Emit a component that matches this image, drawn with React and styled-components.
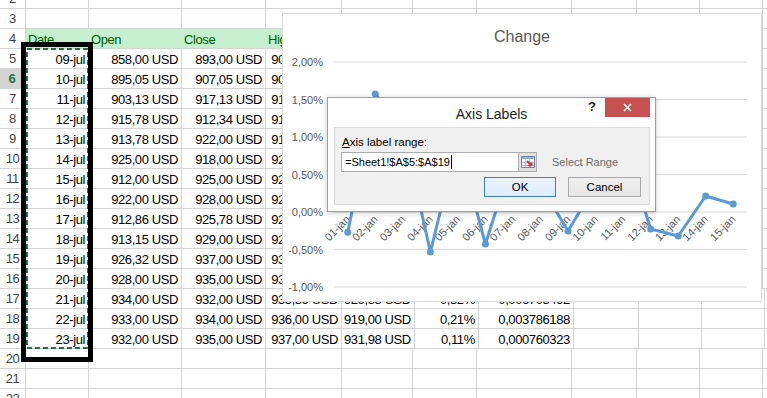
import React from 'react';
import styled, { createGlobalStyle } from 'styled-components';

const GlobalStyle = createGlobalStyle`
    html, body {
        margin: 0;
        padding: 0;
        background: #fff;
        overflow: hidden;
    }
    body {
        font-family: 'Liberation Sans', Arial, sans-serif;
    }
`;

const CELL_FONT = `'Liberation Sans', Arial, sans-serif`;
const COLS = [63, 93, 84, 76, 71, 64, 95, 65, 63, 63, 120];

const sheetRows = [
    { n: 2 },
    { n: 3 },
    { n: 4, head: true, cells: ['Date', 'Open', 'Close', 'High'] },
    { n: 5, cells: ['09-jul', '858,00 USD', '893,00 USD', '905,00 USD'] },
    { n: 6, cells: ['10-jul', '895,05 USD', '907,05 USD', '908,00 USD'], active: true },
    { n: 7, cells: ['11-jul', '903,13 USD', '917,13 USD', '918,45 USD'] },
    { n: 8, cells: ['12-jul', '915,78 USD', '912,34 USD', '917,00 USD'] },
    { n: 9, cells: ['13-jul', '913,78 USD', '922,00 USD', '919,00 USD'] },
    { n: 10, cells: ['14-jul', '925,00 USD', '918,00 USD', '925,00 USD'] },
    { n: 11, cells: ['15-jul', '912,00 USD', '925,00 USD', '927,36 USD'] },
    { n: 12, cells: ['16-jul', '922,00 USD', '928,00 USD', '928,90 USD'] },
    { n: 13, cells: ['17-jul', '912,86 USD', '925,78 USD', '929,44 USD'] },
    { n: 14, cells: ['18-jul', '913,15 USD', '929,00 USD', '929,50 USD'] },
    { n: 15, cells: ['19-jul', '926,32 USD', '937,00 USD', '937,50 USD'] },
    { n: 16, cells: ['20-jul', '928,00 USD', '935,00 USD', '937,19 USD'] },
    { n: 17, cells: ['21-jul', '934,00 USD', '932,00 USD', '935,89 USD', '929,88 USD', '0,32%', '0,006703492'] },
    { n: 18, cells: ['22-jul', '933,00 USD', '934,00 USD', '936,00 USD', '919,00 USD', '0,21%', '0,003786188'] },
    { n: 19, cells: ['23-jul', '932,00 USD', '935,00 USD', '937,00 USD', '931,98 USD', '0,11%', '0,000760323'] },
    { n: 20 },
    { n: 21 },
    { n: 22 },
];

// chart series, percent values
const series = [-0.27, 1.573, 1.107, -0.533, 0.96, -0.427, 0.733, 0.36, -0.253, 0.36, 0.96, -0.227, -0.32, 0.213, 0.107];
const ticks = [2, 1.5, 1, 0.5, 0, -0.5, -1];

const PLOT_LEFT = 334;
const PLOT_RIGHT = 747;
const ZERO_Y = 212;
const STEP = 75;
const catW = (PLOT_RIGHT - PLOT_LEFT) / series.length;
const px = (i) => PLOT_LEFT + catW * (i + 0.5);
const py = (v) => ZERO_Y - v * STEP;
const fmt = (v) => v.toFixed(2).replace('.', ',') + '%';

const Screen = styled.div`
    position: relative;
    width: 767px;
    height: 398px;
    overflow: hidden;
`;

const Sheet = styled.div`
    display: flex;
    flex-direction: column;
    margin-top: -11px;
`;

const Row = styled.div`
    display: flex;
    height: 20px;
`;

const RowHead = styled.div`
    flex: 0 0 26px;
    box-sizing: border-box;
    border-right: ${p => (p.$active ? '2px solid #217346' : '1px solid #d4d4d4')};
    border-bottom: 1px solid #d4d4d4;
    background: ${p => (p.$active ? '#d4d4d4' : '#fff')};
    color: ${p => (p.$active ? '#217346' : '#444')};
    font-weight: ${p => (p.$active ? 700 : 400)};
    font-family: ${CELL_FONT};
    font-size: 13px;
    letter-spacing: -0.4px;
    line-height: 18px;
    padding-top: 1px;
    text-align: center;
    white-space: nowrap;
    overflow: hidden;
`;

const Cell = styled.div`
    flex: 0 0 ${p => p.$w}px;
    box-sizing: border-box;
    height: 20px;
    border-right: 1px solid ${p => (p.$fill ? p.$fill : '#d4d4d4')};
    border-bottom: 1px solid #d4d4d4;
    background: ${p => p.$fill || 'transparent'};
    color: ${p => p.$ink || '#000'};
    text-align: ${p => p.$align};
    padding: 2px 3px 0 2px;
    font-family: ${CELL_FONT};
    font-size: 13px;
    letter-spacing: -0.4px;
    line-height: 18px;
    white-space: nowrap;
`;

const Marker = styled.div`
    position: absolute;
    left: 21px;
    top: 42px;
    width: 72px;
    height: 320px;
    box-sizing: border-box;
    border: 5px solid #000;
`;

const Ants = styled.svg`
    position: absolute;
    left: 26px;
    top: 48px;
`;

const Chart = styled.div`
    position: absolute;
    left: 282px;
    top: 13px;
    width: 480px;
    height: 289px;
    box-sizing: border-box;
    border: 1px solid #d9d9d9;
    background: #fff;
`;

const ChartTitle = styled.div`
    position: relative;
    z-index: 1;
    margin-top: 13px;
    text-align: center;
    font-size: 16px;
    line-height: 20px;
    color: #595959;
`;

const Plot = styled.svg`
    position: absolute;
    left: 0;
    top: 0;
    font-family: 'Liberation Sans', Arial, sans-serif;
    font-size: 11px;
`;

const Dialog = styled.div`
    position: absolute;
    left: 327px;
    top: 97px;
    width: 329px;
    height: 115px;
    box-sizing: border-box;
    background: #fff;
    border: 1px solid #a0a0a0;
    box-shadow: 0 1px 5px rgba(0, 0, 0, 0.22);
    display: flex;
    flex-direction: column;
`;

const TitleBar = styled.div`
    display: grid;
    grid-template-columns: 1fr auto 1fr;
    height: 29px;
`;

const DialogTitle = styled.div`
    grid-column: 2;
    align-self: center;
    font-size: 14px;
    color: #1e1e1e;
    padding-top: 2px;
`;

const TitleControls = styled.div`
    grid-column: 3;
    justify-self: end;
    display: flex;
    align-items: flex-start;
    margin-right: 5px;
`;

const Help = styled.span`
    font-size: 13px;
    font-weight: 700;
    color: #222;
    margin: 1px 9px 0 0;
`;

const CloseBtn = styled.div`
    width: 45px;
    height: 19px;
    background: #c75050;
    display: flex;
    align-items: center;
    justify-content: center;
`;

const Panel = styled.div`
    flex: 1;
    margin: 0 5px 6px 6px;
    border: 1px solid #dcdcdc;
    background: #f0f0f0;
    padding: 7px 7px 0 6px;
    display: flex;
    flex-direction: column;
`;

const FieldLabel = styled.div`
    font-size: 11.5px;
    line-height: 14px;
    color: #000;
    padding-left: 1px;
    u {
        text-decoration: underline;
    }
`;

const FieldRow = styled.div`
    display: flex;
    align-items: center;
    margin-top: 3px;
    height: 20px;
`;

const RangeInput = styled.div`
    width: 178px;
    height: 20px;
    box-sizing: border-box;
    border: 1px solid #abadb3;
    background: #fff;
    font-size: 11px;
    line-height: 18px;
    padding-left: 3px;
    color: #000;
    display: flex;
    align-items: center;
`;

const Caret = styled.span`
    display: inline-block;
    width: 1px;
    height: 14px;
    background: #000;
    margin-left: 1px;
`;

const RangeBtn = styled.div`
    width: 18px;
    height: 20px;
    box-sizing: border-box;
    border: 1px solid #adadad;
    border-left: none;
    background: #e1e1e1;
    display: flex;
    align-items: center;
    justify-content: center;
`;

const Hint = styled.span`
    margin-left: 15px;
    font-size: 11px;
    color: #6d6d6d;
`;

const Buttons = styled.div`
    display: flex;
    justify-content: flex-end;
    gap: 12px;
    margin-top: 5px;
    padding-right: 1px;
`;

const Button = styled.div`
    width: ${p => p.$w}px;
    height: 20px;
    box-sizing: border-box;
    border: 1px solid ${p => (p.$primary ? '#3c7fb1' : '#acacac')};
    background: ${p => (p.$primary ? 'linear-gradient(#ecf4fc, #dcecfc)' : 'linear-gradient(#f0f0f0, #e5e5e5)')};
    font-size: 11.5px;
    line-height: 18px;
    text-align: center;
    color: #000;
`;

const SheetGrid = () => (
    <Sheet>
        {sheetRows.map(({ n, cells = [], head, active }) => (
            <Row key={n}>
                <RowHead $active={active}>{n}</RowHead>
                {COLS.map((w, i) => {
                    const filled = head && i < 7;
                    return (
                        <Cell
                            key={i}
                            $w={w}
                            $fill={filled ? '#c6efce' : null}
                            $ink={head ? '#006100' : null}
                            $align={head ? 'left' : 'right'}
                        >
                            {cells[i] || ''}
                        </Cell>
                    );
                })}
            </Row>
        ))}
    </Sheet>
);

const ChangeChart = () => {
    const pts = series.map((v, i) => `${px(i).toFixed(1)},${py(v).toFixed(1)}`).join(' ');
    return (
        <Chart>
            <ChartTitle>Change</ChartTitle>
            <Plot width="478" height="287" viewBox="0 0 478 287">
                <g transform="translate(-283,-14)">
                    {ticks.map(t => (
                        <g key={t}>
                            <line x1={PLOT_LEFT} x2={PLOT_RIGHT} y1={py(t)} y2={py(t)} stroke="#d9d9d9" strokeWidth="1" />
                            <text x="323" y={py(t) + 4} textAnchor="end" fill="#595959">{fmt(t)}</text>
                        </g>
                    ))}
                    {series.map((v, i) => (
                        <text
                            key={i}
                            x={px(i) + 3}
                            y={ZERO_Y + 8}
                            textAnchor="end"
                            fill="#595959"
                            transform={`rotate(-45 ${px(i) + 3} ${ZERO_Y + 8})`}
                        >
                            {String(i + 1).padStart(2, '0')}-jan
                        </text>
                    ))}
                    <polyline points={pts} fill="none" stroke="#5b9bd5" strokeWidth="3" strokeLinejoin="round" />
                    {series.map((v, i) => (
                        <circle key={i} cx={px(i)} cy={py(v)} r="3.5" fill="#5b9bd5" />
                    ))}
                </g>
            </Plot>
        </Chart>
    );
};

const RangeIcon = () => (
    <svg width="14" height="12" viewBox="0 0 14 12">
        <rect x="0.5" y="0.5" width="13" height="11" fill="#fff" stroke="#6d87a8" />
        <rect x="1" y="1" width="12" height="2" fill="#8fb0d8" />
        <path d="M1 6.5h12M1 9.5h12M4.5 3v8M8.5 3v8" stroke="#a9bbd1" strokeWidth="1" />
        <path d="M6 5 L10.5 9.5 M10.5 9.5 V6.5 M10.5 9.5 H7.5" stroke="#d9302c" strokeWidth="2" fill="none" />
    </svg>
);

const AxisDialog = () => (
    <Dialog>
        <TitleBar>
            <DialogTitle>Axis Labels</DialogTitle>
            <TitleControls>
                <Help>?</Help>
                <CloseBtn>
                    <svg width="9" height="9" viewBox="0 0 9 9">
                        <path d="M1 1 L8 8 M8 1 L1 8" stroke="#fff" strokeWidth="1.6" />
                    </svg>
                </CloseBtn>
            </TitleControls>
        </TitleBar>
        <Panel>
            <FieldLabel><u>A</u>xis label range:</FieldLabel>
            <FieldRow>
                <RangeInput>=Sheet1!$A$5:$A$19<Caret /></RangeInput>
                <RangeBtn><RangeIcon /></RangeBtn>
                <Hint>Select Range</Hint>
            </FieldRow>
            <Buttons>
                <Button $w={72} $primary>OK</Button>
                <Button $w={73}>Cancel</Button>
            </Buttons>
        </Panel>
    </Dialog>
);

const App = () => (
    <Screen>
        <GlobalStyle />
        <SheetGrid />
        <Ants width="63" height="301" viewBox="0 0 63 301">
            <rect x="1" y="1" width="61" height="299" fill="none" stroke="#217346" strokeWidth="2" strokeDasharray="5 3" />
        </Ants>
        <Marker />
        <ChangeChart />
        <AxisDialog />
    </Screen>
);

export default App;
